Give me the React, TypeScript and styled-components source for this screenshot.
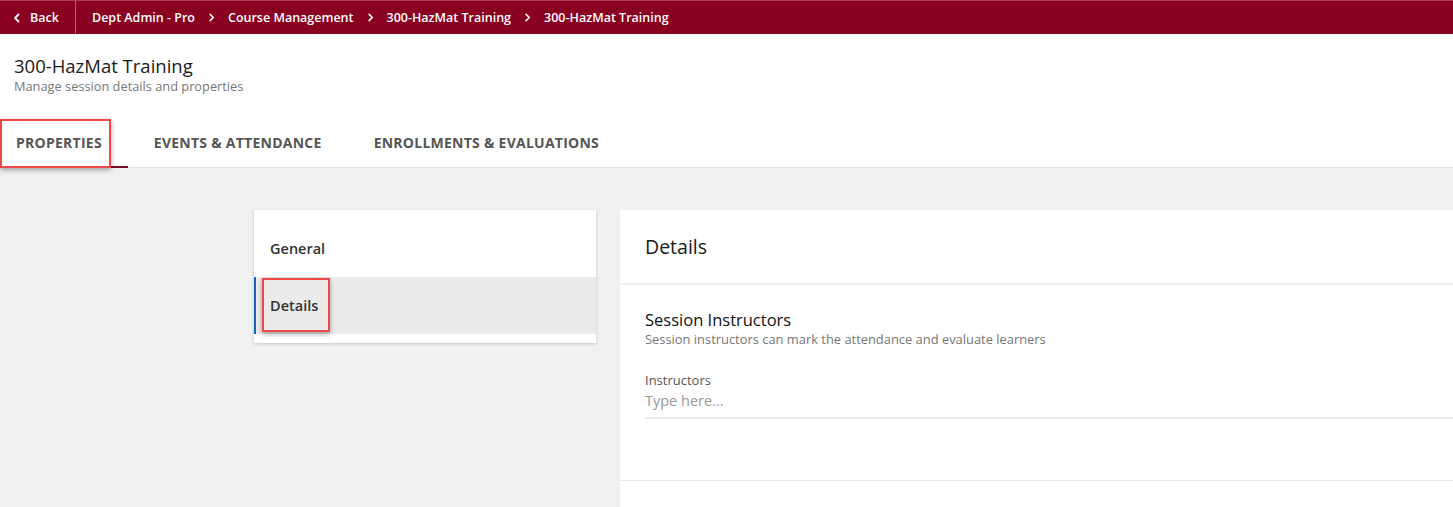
import React from "react";
import styled, { createGlobalStyle } from "styled-components";

const Global = createGlobalStyle`
  html, body { margin: 0; padding: 0; background: #fff; }
  body { font-family: "Open Sans", "Noto Sans", Arial, sans-serif; overflow: hidden; }
  * { box-sizing: border-box; }
`;

const Page = styled.div`
  width: 1453px;
  height: 507px;
  display: flex;
  flex-direction: column;
  overflow: hidden;
`;

const TopBar = styled.header`
  height: 34px;
  background: #8a0020;
  border-top: 1px solid #a8405a;
  display: flex;
  align-items: stretch;
  color: #fff;
  flex-shrink: 0;
`;

const BackButton = styled.button`
  background: none;
  border: none;
  color: #fff;
  font-family: inherit;
  font-size: 12.5px;
  font-weight: 600;
  display: flex;
  align-items: center;
  gap: 8px;
  padding: 0 15px 0 12px;
  border-right: 1px solid rgba(255, 255, 255, 0.35);
  width: 76px;
  cursor: pointer;
`;

const Crumbs = styled.nav`
  display: flex;
  align-items: center;
  padding-left: 16px;
  font-size: 12.5px;
  font-weight: 600;
`;

const Crumb = styled.span`
  white-space: nowrap;
`;

const Sep = styled.span`
  display: inline-flex;
  align-items: center;
  margin: 0 12px;
`;

const Header = styled.div`
  padding: 20px 14px 0;
  flex-shrink: 0;
`;

const Title = styled.h1`
  margin: 0;
  font-size: 18.5px;
  font-weight: 500;
  color: #1a1a1a;
  line-height: 24px;
`;

const Subtitle = styled.p`
  margin: 0;
  font-size: 12.8px;
  color: #777;
  line-height: 17px;
`;

const TabBar = styled.div`
  display: flex;
  margin-top: 24px;
  border-bottom: 1px solid #e6e6e6;
  height: 49px;
  flex-shrink: 0;
`;

const Tab = styled.div<{ $active?: boolean; $first?: boolean }>`
  position: relative;
  display: flex;
  align-items: center;
  padding: 0 26px 0 ${(p) => (p.$first ? "16px" : "26px")};
  font-size: 14px;
  font-weight: 700;
  color: #555;
  text-transform: uppercase;
  border-bottom: 2px solid ${(p) => (p.$active ? "#7a0a24" : "transparent")};
  margin-bottom: -1px;
  letter-spacing: 0.25px;
`;

const Marked = styled.span<{ $l: number; $t: number; $r: number; $b: number }>`
  position: relative;
  &::after {
    content: "";
    position: absolute;
    left: ${(p) => -p.$l}px;
    top: ${(p) => -p.$t}px;
    right: ${(p) => -p.$r}px;
    bottom: ${(p) => -p.$b}px;
    border: 2px solid #f04848;
    box-shadow: 0 2px 5px rgba(0, 0, 0, 0.35);
    pointer-events: none;
  }
`;

const Body = styled.main`
  flex: 1;
  background: #f1f1f1;
  display: flex;
  align-items: flex-start;
  gap: 24px;
  padding: 42px 0 0 254px;
  overflow: hidden;
`;

const SideCard = styled.div`
  width: 342px;
  flex-shrink: 0;
  background: #fff;
  box-shadow: 0 1px 3px rgba(0, 0, 0, 0.2);
  padding: 10px 0 9px;
`;

const SideItem = styled.div<{ $active?: boolean }>`
  height: 57px;
  display: flex;
  align-items: center;
  padding-left: 14px;
  font-size: 14.5px;
  font-weight: 600;
  color: #333;
  background: ${(p) => (p.$active ? "#ebebeb" : "transparent")};
  border-left: 2px solid ${(p) => (p.$active ? "#1565c0" : "transparent")};
`;

const Panel = styled.section`
  width: 900px;
  flex-shrink: 0;
  background: #fff;
  align-self: stretch;
`;

const PanelHeader = styled.div`
  height: 75px;
  display: flex;
  align-items: center;
  padding: 0 25px;
  border-bottom: 2px solid #efefef;
  font-size: 19.5px;
  font-weight: 500;
  color: #1a1a1a;
`;

const Section = styled.div`
  padding: 23px 25px 0;
  height: 196px;
  border-bottom: 1px solid #e8e8e8;
`;

const SectionTitle = styled.h2`
  margin: 0;
  font-size: 16.5px;
  font-weight: 500;
  color: #111;
  line-height: 24px;
`;

const SectionHint = styled.p`
  margin: -1px 0 0;
  font-size: 12.9px;
  color: #777;
  line-height: 16px;
`;

const Field = styled.div`
  margin-top: 25px;
`;

const Label = styled.label`
  display: block;
  font-size: 13px;
  color: #555;
  line-height: 16px;
`;

const Input = styled.input`
  display: block;
  width: 100%;
  border: none;
  border-bottom: 2px solid #eeeeee;
  outline: none;
  font-family: inherit;
  font-size: 14.5px;
  color: #333;
  padding: 3px 0 6px;
  line-height: 20px;
  &::placeholder { color: #999; }
`;

const Chevron = ({ dir, size = 10 }: { dir: "left" | "right"; size?: number }) => (
  <svg width={size} height={size} viewBox="0 0 10 10" fill="none">
    <path
      d={dir === "left" ? "M6.5 1.5 L3 5 L6.5 8.5" : "M3.5 1.5 L7 5 L3.5 8.5"}
      stroke="#fff"
      strokeWidth="1.8"
      strokeLinecap="round"
      strokeLinejoin="round"
    />
  </svg>
);

const crumbs = ["Dept Admin - Pro", "Course Management", "300-HazMat Training", "300-HazMat Training"];

export default function App() {
  return (
    <Page>
      <Global />
      <TopBar>
        <BackButton>
          <Chevron dir="left" />
          Back
        </BackButton>
        <Crumbs>
          {crumbs.map((c, i) => (
            <React.Fragment key={i}>
              {i > 0 && (
                <Sep>
                  <Chevron dir="right" size={9} />
                </Sep>
              )}
              <Crumb>{c}</Crumb>
            </React.Fragment>
          ))}
        </Crumbs>
      </TopBar>
      <Header>
        <Title>300-HazMat Training</Title>
        <Subtitle>Manage session details and properties</Subtitle>
      </Header>
      <TabBar>
        <Tab $active $first>
          <Marked $l={16} $t={14} $r={9} $b={16}>Properties</Marked>
        </Tab>
        <Tab>Events &amp; Attendance</Tab>
        <Tab>Enrollments &amp; Evaluations</Tab>
      </TabBar>
      <Body>
        <SideCard>
          <SideItem>General</SideItem>
          <SideItem $active>
            <Marked $l={8} $t={18} $r={12} $b={17}>Details</Marked>
          </SideItem>
        </SideCard>
        <Panel>
          <PanelHeader>Details</PanelHeader>
          <Section>
            <SectionTitle>Session Instructors</SectionTitle>
            <SectionHint>Session instructors can mark the attendance and evaluate learners</SectionHint>
            <Field>
              <Label>Instructors</Label>
              <Input placeholder="Type here..." />
            </Field>
          </Section>
        </Panel>
      </Body>
    </Page>
  );
}
